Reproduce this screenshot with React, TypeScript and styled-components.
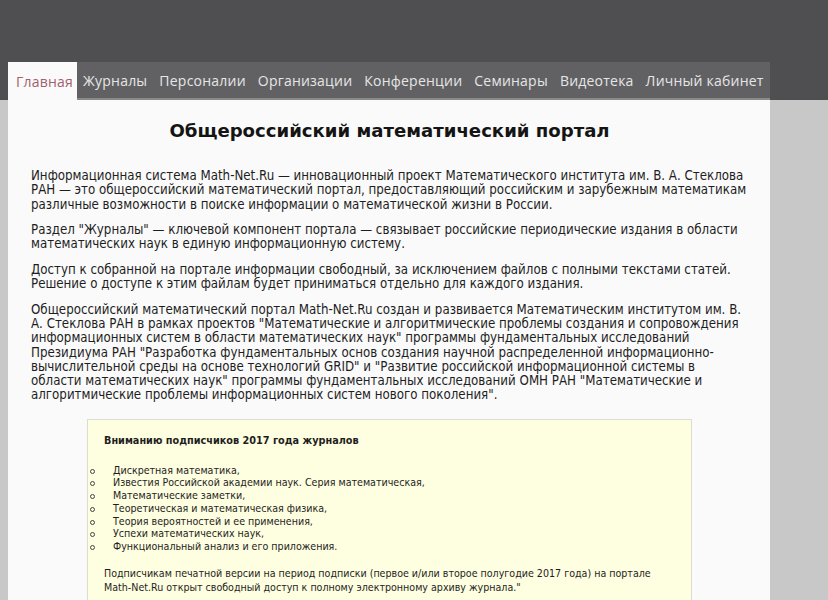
import React from "react";
import styled, { createGlobalStyle } from "styled-components";

const Global = createGlobalStyle`
  html, body { margin: 0; padding: 0; }
  body {
    background: #c8c8c8;
    font-family: "DejaVu Sans Condensed", "DejaVu Sans", Verdana, sans-serif;
    font-stretch: semi-condensed;
  }
`;

const Header = styled.header`
  background: #4f4f51;
  height: 100px;
  padding-top: 62px;
  box-sizing: border-box;
`;

const Nav = styled.nav`
  margin-left: 8px;
  width: 762px;
  height: 38px;
  box-sizing: border-box;
  background: #616163;
  border-bottom: 2px solid #8a8a8b;
  display: flex;
  align-items: stretch;
`;

const NavItem = styled.a<{ $active?: boolean }>`
  display: flex;
  align-items: center;
  padding: 0 6px;
  margin-bottom: ${(p) => (p.$active ? "-2px" : "0")};
  font-family: "Open Sans", sans-serif;
  font-stretch: normal;
  font-size: 14px;
  letter-spacing: 0.22px;
  color: ${(p) => (p.$active ? "#a3606c" : "#e6e6e6")};
  background: ${(p) => (p.$active ? "#fafafa" : "transparent")};
  text-decoration: none;
  white-space: nowrap;
  &:first-child { padding-left: 8px; padding-right: 4px; }
`;

const Main = styled.main`
  margin-left: 8px;
  width: 762px;
  box-sizing: border-box;
  background: #fafafa;
  padding: 20px 22px 40px 23px;
  color: #1e1e1e;
  min-height: 500px;
`;

const Title = styled.h1`
  margin: 0 0 27px;
  text-align: center;
  font-family: "DejaVu Sans", Verdana, sans-serif;
  font-stretch: normal;
  font-size: 18.1px;
  font-weight: bold;
  color: #141414;
  line-height: 22px;
`;

const Para = styled.p`
  margin: 0 0 11.2px;
  font-size: 13.2px;
  line-height: 14.3px;
  white-space: nowrap;
`;

const Notice = styled.section`
  margin: 16px auto 0;
  width: 605px;
  box-sizing: border-box;
  background: #fefee0;
  border: 1px solid #dcdcd0;
  padding: 14px 16px 20px;
  color: #1e1e1e;
`;

const NoticeTitle = styled.h3`
  margin: 0 0 16px;
  font-size: 10.8px;
  font-weight: bold;
  line-height: 14px;
`;

const List = styled.ul`
  margin: 0 0 13px -16px;
  padding-left: 25px;
  list-style: none;
  font-size: 10.6px;
  line-height: 12.7px;
`;

const Item = styled.li`
  position: relative;
  &::before {
    content: "";
    position: absolute;
    left: -23px;
    top: 5px;
    width: 3px;
    height: 3px;
    border: 1px solid #444;
    border-radius: 50%;
  }
`;

const NoticeText = styled.p`
  margin: 0;
  font-size: 10.6px;
  line-height: 14.5px;
`;

const navItems = [
  "Главная",
  "Журналы",
  "Персоналии",
  "Организации",
  "Конференции",
  "Семинары",
  "Видеотека",
  "Личный кабинет",
];

const journals = [
  "Дискретная математика,",
  "Известия Российской академии наук. Серия математическая,",
  "Математические заметки,",
  "Теоретическая и математическая физика,",
  "Теория вероятностей и ее применения,",
  "Успехи математических наук,",
  "Функциональный анализ и его приложения.",
];

const paragraphs: string[][] = [
  [
    "Информационная система Math-Net.Ru — инновационный проект Математического института им. В. А. Стеклова",
    "РАН — это общероссийский математический портал, предоставляющий российским и зарубежным математикам",
    "различные возможности в поиске информации о математической жизни в России.",
  ],
  [
    "Раздел \"Журналы\" — ключевой компонент портала — связывает российские периодические издания в области",
    "математических наук в единую информационную систему.",
  ],
  [
    "Доступ к собранной на портале информации свободный, за исключением файлов с полными текстами статей.",
    "Решение о доступе к этим файлам будет приниматься отдельно для каждого издания.",
  ],
  [
    "Общероссийский математический портал Math-Net.Ru создан и развивается Математическим институтом им. В.",
    "А. Стеклова РАН в рамках проектов \"Математические и алгоритмические проблемы создания и сопровождения",
    "информационных систем в области математических наук\" программы фундаментальных исследований",
    "Президиума РАН \"Разработка фундаментальных основ создания научной распределенной информационно-",
    "вычислительной среды на основе технологий GRID\" и \"Развитие российской информационной системы в",
    "области математических наук\" программы фундаментальных исследований ОМН РАН \"Математические и",
    "алгоритмические проблемы информационных систем нового поколения\".",
  ],
];

export default function App() {
  return (
    <>
      <Global />
      <Header>
        <Nav>
          {navItems.map((n, i) => (
            <NavItem key={n} href="#" $active={i === 0}>
              {n}
            </NavItem>
          ))}
        </Nav>
      </Header>
      <Main>
        <Title>Общероссийский математический портал</Title>
        {paragraphs.map((lines, pi) => (
          <Para key={pi}>
            {lines.map((l, li) => (
              <React.Fragment key={li}>
                {li > 0 && <br />}
                {l}
              </React.Fragment>
            ))}
          </Para>
        ))}
        <Notice>
          <NoticeTitle>Вниманию подписчиков 2017 года журналов</NoticeTitle>
          <List>
            {journals.map((j) => (
              <Item key={j}>{j}</Item>
            ))}
          </List>
          <NoticeText>
            Подписчикам печатной версии на период подписки (первое и/или второе полугодие 2017 года) на портале
            Math-Net.Ru открыт свободный доступ к полному электронному архиву журнала."
          </NoticeText>
        </Notice>
      </Main>
    </>
  );
}
